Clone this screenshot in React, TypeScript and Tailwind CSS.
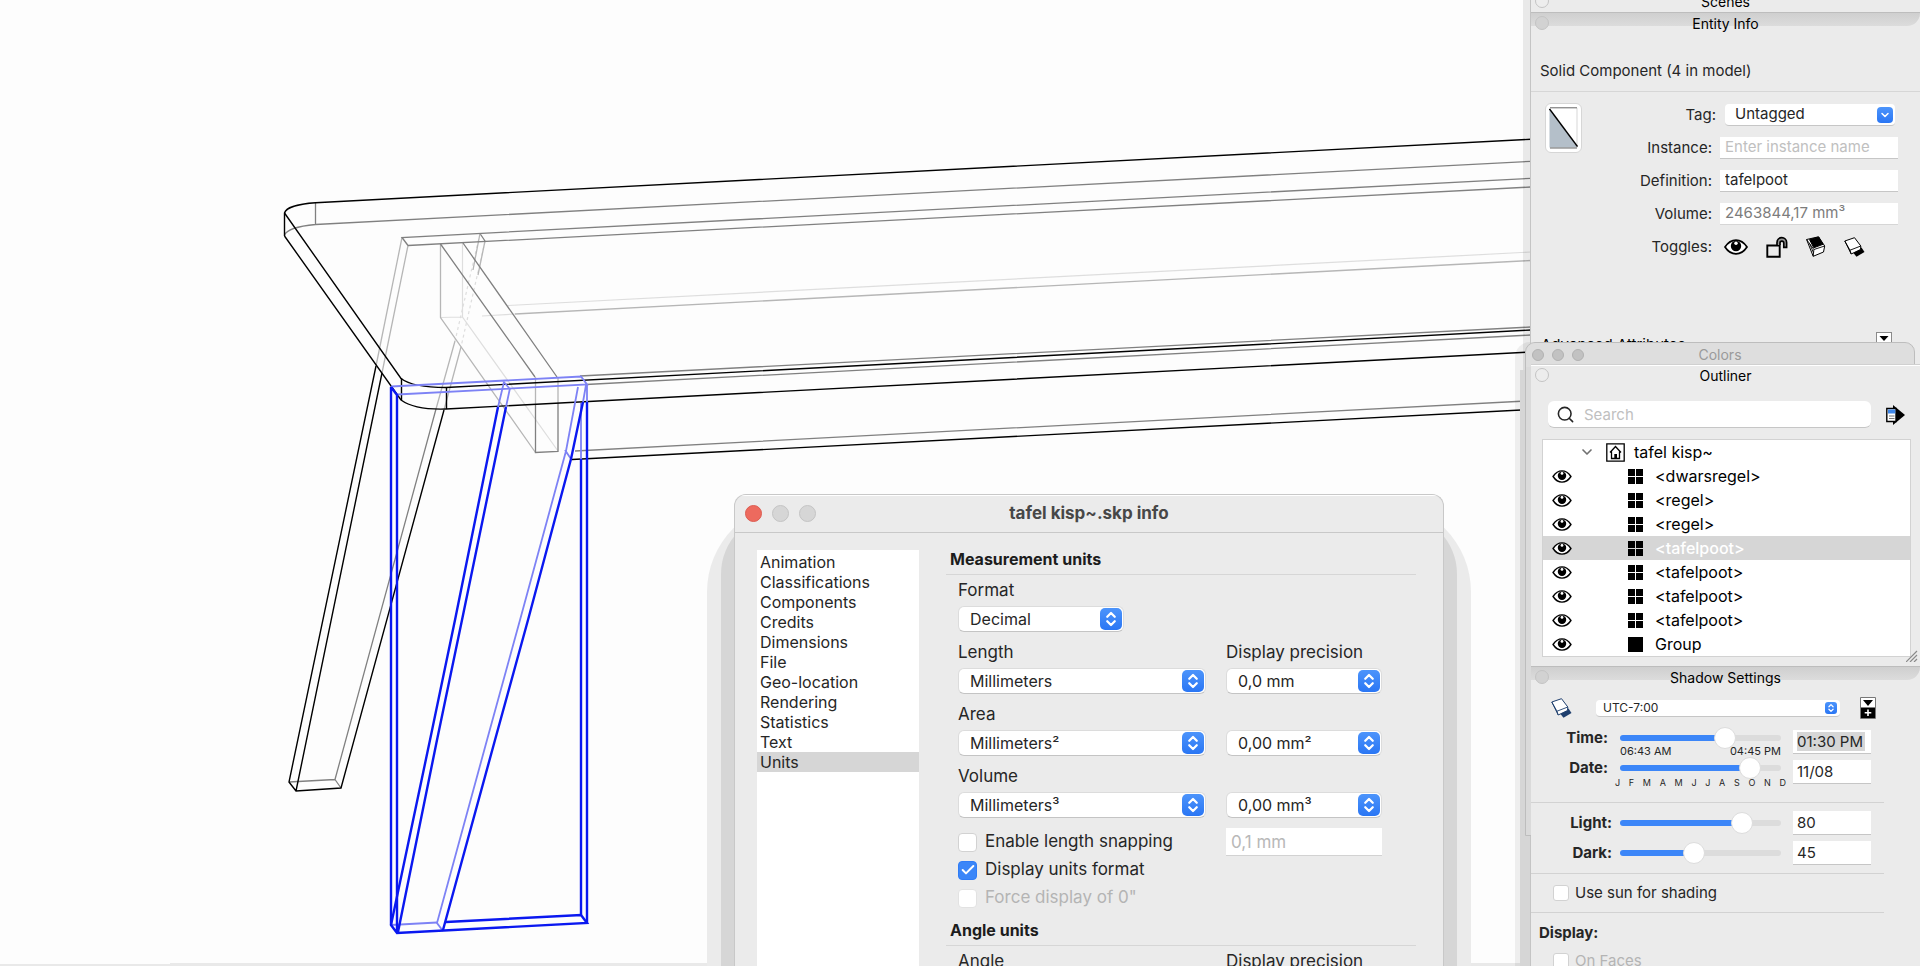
import { useState, type ReactNode } from 'react'
import { Check, ChevronDown, ChevronsUpDown, Search } from 'lucide-react'
import clsx from 'clsx'

const SECTIONS = [
  'Animation',
  'Classifications',
  'Components',
  'Credits',
  'Dimensions',
  'File',
  'Geo-location',
  'Rendering',
  'Statistics',
  'Text',
  'Units'
]

const MONTHS = ['J', 'F', 'M', 'A', 'M', 'J', 'J', 'A', 'S', 'O', 'N', 'D']

const OUTLINE: { name: string; group?: boolean }[] = [
  { name: '<dwarsregel>' },
  { name: '<regel>' },
  { name: '<regel>' },
  { name: '<tafelpoot>' },
  { name: '<tafelpoot>' },
  { name: '<tafelpoot>' },
  { name: '<tafelpoot>' },
  { name: 'Group', group: true }
]

function EyeIcon({ className }: { className: string }) {
  return (
    <svg viewBox="0 0 24 16" className={className} aria-hidden="true">
      <path
        d="M1 8C4 3.4 7.600 1.100 12 1.100S20 3.400 23 8C20 12.600 16.400 14.900 12 14.900S4 12.600 1 8Z"
        fill="#fff"
        stroke="#000"
        strokeWidth="1.7"
      />
      <circle cx="12" cy="7" r="5.200" />
      <circle cx="12" cy="4.200" r="1.700" fill="#fff" />
    </svg>
  )
}

function LockIcon() {
  return (
    <svg viewBox="0 0 22 22" className="h-[22px] w-[22px]" fill="none" stroke="#000" aria-hidden="true">
      <path d="M1.300 9.500H13.700V20.700H1.300Z" strokeWidth="1.900" />
      <path d="M11 9V6.500a4.800 4.800 0 0 1 9.600 0V11.300H17.800V7a1.900 1.900 0 0 0-3.800 0V9" fill="#999" strokeWidth="1.700" />
    </svg>
  )
}

function ShadowReceiveIcon() {
  return (
    <svg viewBox="0 0 20 21" className="h-[21px] w-5" fill="#fff" stroke="#000" strokeLinejoin="round" aria-hidden="true">
      <path d="M.6 3.500 12.500.8 18.700 10 17.500 16 7.200 20.300Z" strokeWidth="1" />
      <path d="M3.500 3.600 12.700 1 17 8.300 7.800 11.800Z" fill="#000" />
      <path d="M.6 3.500 7.900 13.500 18.700 10M7.900 13.500 7.200 20.300M3.800 8 7.500 16.800" fill="none" strokeWidth=".9" />
    </svg>
  )
}

// card with its shadow in front, also used to toggle shadows on and off
function CardShadowIcon({ color }: { color: string }) {
  return (
    <svg viewBox="0 0 21 20" className="h-5 w-[21px]" strokeLinejoin="round" aria-hidden="true">
      <path d="M9 15.500 17.500 10.500 20.500 15 12.500 19.700Z" fill={color} />
      <path d="M.8 4 10.500.7 16.800 9 16.500 12.500 7.200 17Z" fill="#fff" stroke={color} />
      <path d="M.8 4 6 13.200 16.800 9M6 13.200 7.200 17" fill="none" stroke={color} strokeWidth=".9" />
    </svg>
  )
}

function Stepper({ small, single }: { small?: boolean; single?: boolean }) {
  return (
    <span
      className={clsx(
        'pointer-events-none absolute inset-y-0 my-auto flex items-center justify-center bg-gradient-to-b from-[#4c94fb] to-[#2a76f4] text-white',
        small ? 'right-[3px] h-3 w-3 rounded-[3px]' : single ? 'right-[2px] h-4 w-4 rounded' : 'right-[2px] h-[22px] w-[22px] rounded-[5px]'
      )}
    >
      {single ? (
        <ChevronDown className="h-3 w-3" strokeWidth={3} />
      ) : (
        <ChevronsUpDown className={small ? 'h-[10px] w-[10px]' : 'h-[18px] w-[18px]'} strokeWidth={3} />
      )}
    </span>
  )
}

function Select({ id, label, value, className }: { id: string; label?: string; value: string; className: string }) {
  return (
    <div className={clsx('relative', className)}>
      <select
        id={id}
        aria-label={label}
        defaultValue={value}
        className="block h-[26px] w-full appearance-none rounded-md border border-[#dcdcdc] border-b-[#c4c4c4] bg-white pl-[11px] pr-7 text-base leading-6 text-[#262626]"
      >
        <option>{value}</option>
      </select>
      <Stepper />
    </div>
  )
}

function UnitRow({ id, label, value, precision, showHeading }: { id: string; label: string; value: string; precision: string; showHeading?: boolean }) {
  return (
    <div className="grid grid-cols-[248px_156px] gap-x-5 gap-y-1">
      <label htmlFor={id} className="h-6 leading-6">
        {label}
      </label>
      {showHeading && (
        <label htmlFor={`${id}-precision`} className="h-6 leading-6">
          Display precision
        </label>
      )}
      <Select id={id} value={value} className="col-start-1" />
      <Select id={`${id}-precision`} label={showHeading ? undefined : `${label} display precision`} value={precision} className="col-start-2" />
    </div>
  )
}

function CheckRow({ label, checked, disabled }: { label: string; checked?: boolean; disabled?: boolean }) {
  return (
    <label className={clsx('flex h-7 items-center gap-2', disabled && 'text-[#b4b4b4]')}>
      <span className="relative flex">
        <input
          type="checkbox"
          defaultChecked={checked}
          disabled={disabled}
          className="peer h-[19px] w-[19px] appearance-none rounded border border-[#d2d2d2] bg-white checked:border-[#2f7cf6] checked:bg-[#3b86f8] disabled:border-[#e2e2e2]"
        />
        <Check className="pointer-events-none absolute inset-0 m-auto hidden h-4 w-4 text-white peer-checked:block" strokeWidth={3} />
      </span>
      {label}
    </label>
  )
}

function SmallCheck({ label, disabled }: { label: string; disabled?: boolean }) {
  return (
    <label className={clsx('flex items-center gap-[6px] pl-[22px]', disabled && 'text-[#b4b4b4]')}>
      <input type="checkbox" disabled={disabled} className="h-4 w-4 appearance-none rounded-[3px] border border-[#d2d2d2] bg-white" />
      {label}
    </label>
  )
}

function Slider({ id, value }: { id: string; value: number }) {
  const [v, setV] = useState(value)
  return (
    <div className="flex h-4 items-center">
      <input
        id={id}
        type="range"
        min={0}
        max={100}
        step={0.1}
        value={v}
        onChange={(e) => setV(Number(e.target.value))}
        style={{ background: `linear-gradient(to right, #3c86f8 ${v}%, #dcdcdc ${v}%)` }}
        className="h-[6px] w-full appearance-none rounded-full [&::-webkit-slider-thumb]:h-[22px] [&::-webkit-slider-thumb]:w-[22px] [&::-webkit-slider-thumb]:appearance-none [&::-webkit-slider-thumb]:rounded-full [&::-webkit-slider-thumb]:border [&::-webkit-slider-thumb]:border-[#dcdcdc] [&::-webkit-slider-thumb]:bg-white"
      />
    </div>
  )
}

function PaletteTitle({ title, shaded }: { title: string; shaded?: boolean }) {
  return (
    <header className="relative h-[22px]">
      {shaded && <div className="absolute inset-x-0 top-0 h-[13px] rounded-br-3xl bg-gradient-to-b from-[#cfcfcf] to-[#dcdcdc]" />}
      <button
        aria-label={`Close ${title}`}
        className={clsx('absolute left-1 top-[3px] h-[14px] w-[14px] rounded-full border border-[#c4c4c4]', shaded ? 'bg-[#d2d2d2]' : 'bg-[#ededed]')}
      />
      <h2 className="relative text-center text-sm leading-[22px] text-black">{title}</h2>
    </header>
  )
}

function Field({ id, label, children }: { id: string; label: string; children: ReactNode }) {
  return (
    <div className="grid h-[33px] grid-cols-[81px_178px] items-center gap-x-2">
      <label htmlFor={id} className="text-right">
        {label}
      </label>
      {children}
    </div>
  )
}

const INPUT = 'h-[22px] w-full border-b border-[#c6c6c6] bg-white px-[5px] text-[#262626] placeholder:text-[#c0c0c0]'

function Model() {
  return (
    <svg viewBox="0 0 1920 966" preserveAspectRatio="xMinYMin slice" className="absolute inset-0 h-full w-full" fill="none" role="img" aria-label="Wireframe of a table">
      <g stroke="#dedede" strokeWidth="1.200">
        <path d="M508 305.500 1531 252M482 316 515 314" />
        <path d="M462.500 243V317L558 451M440 317.500 462.500 317" />
        <path d="M480 233.500 455 341" strokeDasharray="3 3" />
        <path d="M485 241 461 347" strokeDasharray="3 3" />
      </g>
      <g stroke="#b6b6b6" strokeWidth="1.300">
        <path d="M402 237.500 376 366M408 245.500 382 373" />
        <path d="M440.500 244V317.500L535.500 452.500" />
        <path d="M455 341 436 409M461 347 444 410" />
        <path d="M480 233.500 473 270M485 241 478 275" />
        <path d="M515 314 1531 260.500" />
        <path d="M535.500 377V404M558 377V403" />
      </g>
      <g stroke="#808080" strokeWidth="1.300">
        <path d="M284.500 235C287 229 300 226 315.500 224.500L1531 161.300M315.500 203V224.500" />
        <path d="M408 245.500 402 237.500 1531 178.300M408 245.500 1531 187M480 233.500 485 241" />
        <path d="M440.500 244 535 377M463 243 557 377" />
        <path d="M535.500 404V452.500L558 451.500V403" />
        <path d="M580 376 1531 327M586 384.500 1531 335M575 451 1526 401" />
        <path d="M436 409 335 779.500 341 788M289 782 335 779.500" />
      </g>
      <g stroke="#000" strokeWidth="1.400">
        <path d="M284.500 236V213C286 207 300 203.700 315.500 202.700L1531 139.300" />
        <path d="M284.500 213 401 378.500C410 385.500 430 387.500 446 387.500L1531 330" />
        <path d="M284.500 236 401 400C412 408 430 409.500 446 409L1531 352" />
        <path d="M401.500 378V400M446.500 387V409" />
        <path d="M572 459.500 1531 409.500" />
        <path d="M376 366 289 782 296 791 341 788 444 410M382 373 296 791" />
      </g>
      <g stroke="#7d82f5" strokeWidth="1.800">
        <path d="M391 386.500 581 376.500 587 384.500 397 394.500M503 381 509 388" />
        <path d="M504 382 498 407M510 388 506 407" />
        <path d="M578 387 566 451 520 620 487 740 437 923 443 931M565 450 571 459" />
        <path d="M586 385 583 402M587 385V402M581 403V459M391 925 437 922.500" />
      </g>
      <g stroke="#0a18f0" strokeWidth="2.400">
        <path d="M391 387V925L397 933 587 923 581 915 446 922M397 394V932M391 387 397 395" />
        <path d="M498 407 455 620 430 740 391 925M506 407 462 620 437 740 398 932" />
        <path d="M583 402 571 459 528 620 495 740 443 930" />
        <path d="M581 459V915M587 402V923" />
      </g>
      <path d="M0 964H170V963H1920V966H0Z" fill="#e9e9e9" />
    </svg>
  )
}

function ModelInfo() {
  const [section, setSection] = useState('Units')
  return (
    <div className="absolute bottom-0 left-[734px] top-[494px] w-[710px]">
      <div className="absolute -inset-x-[27px] bottom-0 top-2 rounded-t-[90px] bg-[#ebebeb]" />
      <div className="absolute -inset-x-[13px] bottom-0 top-5 rounded-t-[60px] bg-[#d6d6d6]" />
      <section className="relative flex h-full flex-col overflow-hidden rounded-t-xl border border-b-0 border-[#c8c8c8] bg-[#ebebeb] text-[17px] text-[#262626]">
        <header className="relative flex h-[38px] shrink-0 items-center gap-[10px] border-b border-[#c8c8c8] px-[10px] shadow-[inset_0_1px_0_#fff]">
          <button aria-label="Close" className="h-[17px] w-[17px] rounded-full border border-[#dc5d52] bg-[#ed6a5e]" />
          <button aria-label="Minimize" className="h-[17px] w-[17px] rounded-full border border-[#c4c4c4] bg-[#d6d6d6]" />
          <button aria-label="Zoom" className="h-[17px] w-[17px] rounded-full border border-[#c4c4c4] bg-[#d6d6d6]" />
          <h1 className="flex-1 pr-[81px] text-center font-bold text-[#474747]">tafel kisp~.skp info</h1>
        </header>
        <div className="flex flex-1 gap-[27px] pl-[22px] pr-[27px]">
          <ul className="mt-[17px] w-[162px] shrink-0 bg-white pt-[2px] text-base">
            {SECTIONS.map((s) => (
              <li key={s}>
                <button
                  onClick={() => setSection(s)}
                  className={clsx('block h-5 w-full px-[3px] text-left leading-5', s === section && 'bg-[#d6d6d6]')}
                >
                  {s}
                </button>
              </li>
            ))}
          </ul>
          <div className="flex-1 pt-[14px]">
            <h2 className="h-7 border-b border-[#d6d6d6] pl-1 text-base font-bold leading-6 text-[#1c1c1c]">Measurement units</h2>
            <div className="flex flex-col gap-2 pl-3 pt-[3px]">
              <div className="flex flex-col gap-1">
                <label htmlFor="format" className="h-6 leading-6">
                  Format
                </label>
                <Select id="format" value="Decimal" className="w-[166px]" />
              </div>
              <UnitRow id="length" label="Length" value="Millimeters" precision="0,0 mm" showHeading />
              <UnitRow id="area" label="Area" value="Millimeters²" precision="0,00 mm²" />
              <UnitRow id="volume-unit" label="Volume" value="Millimeters³" precision="0,00 mm³" />
            </div>
            <div className="grid grid-cols-[248px_156px] gap-x-5 pl-3 pt-[10px]">
              <CheckRow label="Enable length snapping" />
              <input
                aria-label="Snapping length"
                disabled
                defaultValue="0,1 mm"
                className="h-7 border-b border-[#d2d2d2] bg-white px-[5px] text-[#b8b8b8]"
              />
              <div className="col-span-2">
                <CheckRow label="Display units format" checked />
                <CheckRow label={'Force display of 0"'} disabled />
              </div>
            </div>
            <h2 className="mt-[6px] h-7 border-b border-[#d6d6d6] pl-1 text-base font-bold leading-6 text-[#1c1c1c]">Angle units</h2>
            <div className="grid grid-cols-[248px_156px] gap-x-5 pl-3 pt-[3px] leading-6">
              <span>Angle</span>
              <span>Display precision</span>
            </div>
          </div>
        </div>
      </section>
    </div>
  )
}

function EntityInfo() {
  return (
    <section className="h-[352px] shrink-0 overflow-hidden border-t border-[#bdbdbd]">
      <PaletteTitle title="Entity Info" shaded />
      <p className="mt-6 h-[33px] border-b border-[#d6d6d6] pl-[9px] leading-6">Solid Component (4 in model)</p>
      <div className="flex justify-between pl-[14px] pr-[22px] pt-[6px]">
        <button aria-label="Material" className="mt-[5px] h-[50px] w-[37px] rounded-md border border-[#d6d6d6] bg-white p-[3px]">
          <svg viewBox="0 0 29 42" className="h-full w-full">
            <path d="M.5 1.500V40.500H28.500Z" fill="#b4bfc9" />
            <path d="M28 1V40" stroke="#e4e4e4" strokeWidth="1.500" />
            <path d="M1 .8H28M1 41H28" stroke="#666" />
            <path d="M.5 2 28.500 39.500" stroke="#000" strokeWidth="1.500" />
          </svg>
        </button>
        <div>
          <div className="grid h-[33px] grid-cols-[85px_170px] items-center gap-x-[9px]">
            <label htmlFor="tag" className="text-right">
              Tag:
            </label>
            <div className="relative">
              <select
                id="tag"
                defaultValue="Untagged"
                className="block h-[22px] w-full appearance-none rounded border-b border-[#c6c6c6] bg-white pl-[10px] leading-5"
              >
                <option>Untagged</option>
              </select>
              <Stepper single />
            </div>
          </div>
          <Field id="instance" label="Instance:">
            <input id="instance" placeholder="Enter instance name" className={INPUT} />
          </Field>
          <Field id="definition" label="Definition:">
            <input id="definition" defaultValue="tafelpoot" className={INPUT} />
          </Field>
          <Field id="volume" label="Volume:">
            <input id="volume" readOnly value="2463844,17 mm³" className="h-[22px] w-full border-b border-[#d6d6d6] bg-white px-[5px] text-[#7c7c7c]" />
          </Field>
          <div className="grid h-[33px] grid-cols-[81px_178px] items-center gap-x-2">
            <span className="text-right">Toggles:</span>
            <div className="flex items-center gap-[18px] pl-1">
              <button aria-label="Hide">
                <EyeIcon className="h-4 w-6" />
              </button>
              <button aria-label="Lock">
                <LockIcon />
              </button>
              <button aria-label="Receive shadows">
                <ShadowReceiveIcon />
              </button>
              <button aria-label="Cast shadows">
                <CardShadowIcon color="#000" />
              </button>
            </div>
          </div>
        </div>
      </div>
      <div className="flex justify-between pl-[10px] pr-[28px] pt-[69px]">
        <h3 className="pt-[3px] leading-5 text-black">Advanced Attributes</h3>
        <button aria-label="Expand attributes" className="h-4 w-4 border border-[#8a8a8a] bg-white">
          <svg viewBox="0 0 14 14" className="h-full w-full">
            <path d="M2.500 3H11.500L7 8Z" />
          </svg>
        </button>
      </div>
    </section>
  )
}

function ColorsWindow() {
  return (
    <section className="absolute left-[-5px] right-[5px] top-[342px] h-[494px] rounded-t-[10px] border border-[#bdbdbd] bg-[#dadada]">
      <header className="flex h-6 items-center gap-2 rounded-t-[10px] bg-[#dedede] pl-[6px]">
        <button aria-label="Close Colors" className="h-3 w-3 rounded-full border border-[#b2b2b2] bg-[#c2c2c2]" />
        <button aria-label="Minimize Colors" className="h-3 w-3 rounded-full border border-[#b2b2b2] bg-[#c2c2c2]" />
        <button aria-label="Zoom Colors" className="h-3 w-3 rounded-full border border-[#b2b2b2] bg-[#c2c2c2]" />
        <h2 className="flex-1 pr-[66px] text-center text-sm text-[#9a9a9a]">Colors</h2>
      </header>
    </section>
  )
}

function Outliner() {
  const [selected, setSelected] = useState(3)
  return (
    <section className="relative h-[302px] shrink-0 border-t border-[#d0d0d0] bg-[#ebebeb] shadow-[inset_0_1px_0_#fff]">
      <PaletteTitle title="Outliner" />
      <div className="flex items-center pl-[17px] pr-[15px] pt-[14px]">
        <div className="relative flex-1">
          <Search className="absolute inset-y-0 left-2 my-auto h-[19px] w-[19px] text-[#262626]" strokeWidth={2} />
          <input
            type="search"
            aria-label="Search"
            placeholder="Search"
            className="block h-[27px] w-full rounded-md border-b border-[#c6c6c6] bg-white pl-9 placeholder:text-[#c0c0c0]"
          />
        </div>
        <button aria-label="Details" className="ml-[15px]">
          <svg viewBox="0 0 19 20" className="h-5 w-[19px]">
            <path d="M7 0 19 10 7 20Z" />
            <path d="M.8 3.500H10V16.500H.8Z" fill="#fff" stroke="#000" strokeWidth="1.400" />
            <path d="M2 4.500H9.300V8.500H2Z" fill="#3f87e8" />
            <path d="M3 11H8.500M3 13.500H8.500" stroke="#777" />
          </svg>
        </button>
      </div>
      <ul className="ml-[11px] mr-[9px] mt-[11px] border border-[#d2d2d2] bg-white text-base text-black">
        <li className="flex h-6 items-center pl-9">
          <button aria-label="Collapse">
            <ChevronDown className="h-4 w-4 text-[#707070]" strokeWidth={2.500} />
          </button>
          <svg viewBox="0 0 19 19" className="ml-[11px] h-[19px] w-[19px]" fill="none" stroke="#000">
            <path d="M.8.8H18.200V18.200H.8Z" strokeWidth="1.300" />
            <path d="M4 9.500 9.500 3.500 15 9.500M5.500 8.500V15.500H13.500V8.500" strokeWidth="1.300" />
            <path d="M8.300 11H11V15.500H8.300Z" fill="#000" stroke="none" />
          </svg>
          <span className="ml-[9px]">tafel kisp~</span>
        </li>
        {OUTLINE.map((o, i) => (
          <li key={i} className={clsx('flex h-6 items-center pl-[9px]', i === selected && 'bg-[#d6d6d6] text-white')}>
            <button aria-label={`Hide ${o.name}`}>
              <EyeIcon className="h-[13px] w-5" />
            </button>
            <svg viewBox="0 0 15 15" className="ml-[56px] h-[15px] w-[15px]" fill="#000">
              {o.group ? <path d="M0 0H15V15H0Z" /> : <path d="M0 0H7V7H0ZM8 0H15V7H8ZM0 8H7V15H0ZM8 8H15V15H8Z" />}
            </svg>
            <button onClick={() => setSelected(i)} className={clsx('flex-1 pl-3 text-left', i === selected && 'font-medium')}>
              {o.name}
            </button>
          </li>
        ))}
      </ul>
      <svg viewBox="0 0 12 12" className="absolute bottom-1 right-[2px] h-3 w-3" stroke="#8a8a8a" strokeWidth="1.200">
        <path d="M0 12 11 1M4 12 11 5M8 12 11 9" />
      </svg>
    </section>
  )
}

function ShadowSettings() {
  return (
    <section className="relative flex-1 border-t border-[#bdbdbd] bg-[#ebebeb]">
      <PaletteTitle title="Shadow Settings" shaded />
      <div className="mt-2 flex h-[22px] items-center pl-5">
        <button aria-label="Show shadows">
          <CardShadowIcon color="#1f3f6e" />
        </button>
        <div className="relative ml-6 w-[244px]">
          <select aria-label="Time zone" defaultValue="UTC-7:00" className="block h-[17px] w-full appearance-none rounded border-b border-[#c6c6c6] bg-white pl-[7px] text-xs leading-4">
            <option>UTC-7:00</option>
          </select>
          <Stepper small />
        </div>
        <button aria-label="Hide details" className="ml-5">
          <svg viewBox="0 0 16 22" className="h-[22px] w-4">
            <path d="M.5.500H15.500V21.500H.5Z" fill="#fff" stroke="#777" />
            <path d="M3 3H13L8 9ZM1 10.500H15V21H1Z" />
            <path d="M8 12.500V19M4.700 15.800H11.300" stroke="#fff" strokeWidth="1.600" />
          </svg>
        </button>
      </div>
      <div className="mr-9 grid grid-cols-[77px_161px_78px] gap-x-3 border-b border-[#d2d2d2] pb-3 pt-[11px]">
        <label htmlFor="time" className="text-right font-bold leading-4">
          Time:
        </label>
        <div className="h-[30px]">
          <Slider id="time" value={67.600} />
          <div className="flex justify-between text-[11px] leading-[10px]">
            <span>06:43 AM</span>
            <span>04:45 PM</span>
          </div>
        </div>
        <div className="flex h-6 items-center border-b border-[#c6c6c6] bg-white px-1">
          <input aria-label="Time of day" defaultValue="01:30 PM" className="h-[19px] w-[68px] bg-[#d6d6d6]" />
        </div>
        <label htmlFor="date" className="text-right font-bold leading-4">
          Date:
        </label>
        <div className="h-[30px]">
          <Slider id="date" value={85.600} />
          <div className="-mx-[5px] flex justify-between text-[9px] leading-[14px]">
            {MONTHS.map((m, i) => (
              <span key={i}>{m}</span>
            ))}
          </div>
        </div>
        <input aria-label="Day" defaultValue="11/08" className="h-6 border-b border-[#c6c6c6] bg-white px-1" />
      </div>
      <div className="mr-9 grid grid-cols-[81px_161px_78px] items-center border-b border-[#d2d2d2] py-[5px]">
        <label htmlFor="light" className="text-right font-bold leading-[30px]">
          Light:
        </label>
        <div className="-mr-2 ml-2">
          <Slider id="light" value={80} />
        </div>
        <input aria-label="Light value" defaultValue="80" className="ml-5 h-6 w-[78px] border-b border-[#c6c6c6] bg-white px-1" />
        <label htmlFor="dark" className="text-right font-bold leading-[30px]">
          Dark:
        </label>
        <div className="-mr-2 ml-2">
          <Slider id="dark" value={45} />
        </div>
        <input aria-label="Dark value" defaultValue="45" className="ml-5 h-6 w-[78px] border-b border-[#c6c6c6] bg-white px-1" />
      </div>
      <div className="mr-9 border-b border-[#d2d2d2] py-2">
        <SmallCheck label="Use sun for shading" />
      </div>
      <h3 className="pb-[6px] pl-2 pt-[9px] font-bold">Display:</h3>
      <SmallCheck label="On Faces" disabled />
    </section>
  )
}

export default function App() {
  return (
    <main className="relative h-screen overflow-hidden bg-[#fdfdfd] font-['Inter',sans-serif]">
      <Model />
      <ModelInfo />
      <aside className="absolute inset-y-0 right-0 w-[390px] text-[15px] leading-[22px] text-[#262626]">
        <div className="absolute inset-y-0 -left-[7px] w-[7px] bg-black/8" />
        <div className="absolute -left-[15px] bottom-0 top-[342px] w-[15px] rounded-tl-[20px] bg-black/6" />
        <div className="absolute -left-[10px] bottom-0 top-[370px] w-[10px] bg-[#d6d6d6]" />
        <div className="flex h-full flex-col border-l border-[#c4c4c4] bg-[#ebebeb]">
          <section className="relative flex h-3 shrink-0 items-end justify-center overflow-hidden">
            <button aria-label="Close Scenes" className="absolute -top-[6px] left-1 h-[14px] w-[14px] rounded-full border border-[#c4c4c4] bg-[#ededed]" />
            <h2 className="text-sm leading-[20px] text-black">Scenes</h2>
          </section>
          <EntityInfo />
          <ColorsWindow />
          <Outliner />
          <ShadowSettings />
        </div>
      </aside>
    </main>
  )
}
